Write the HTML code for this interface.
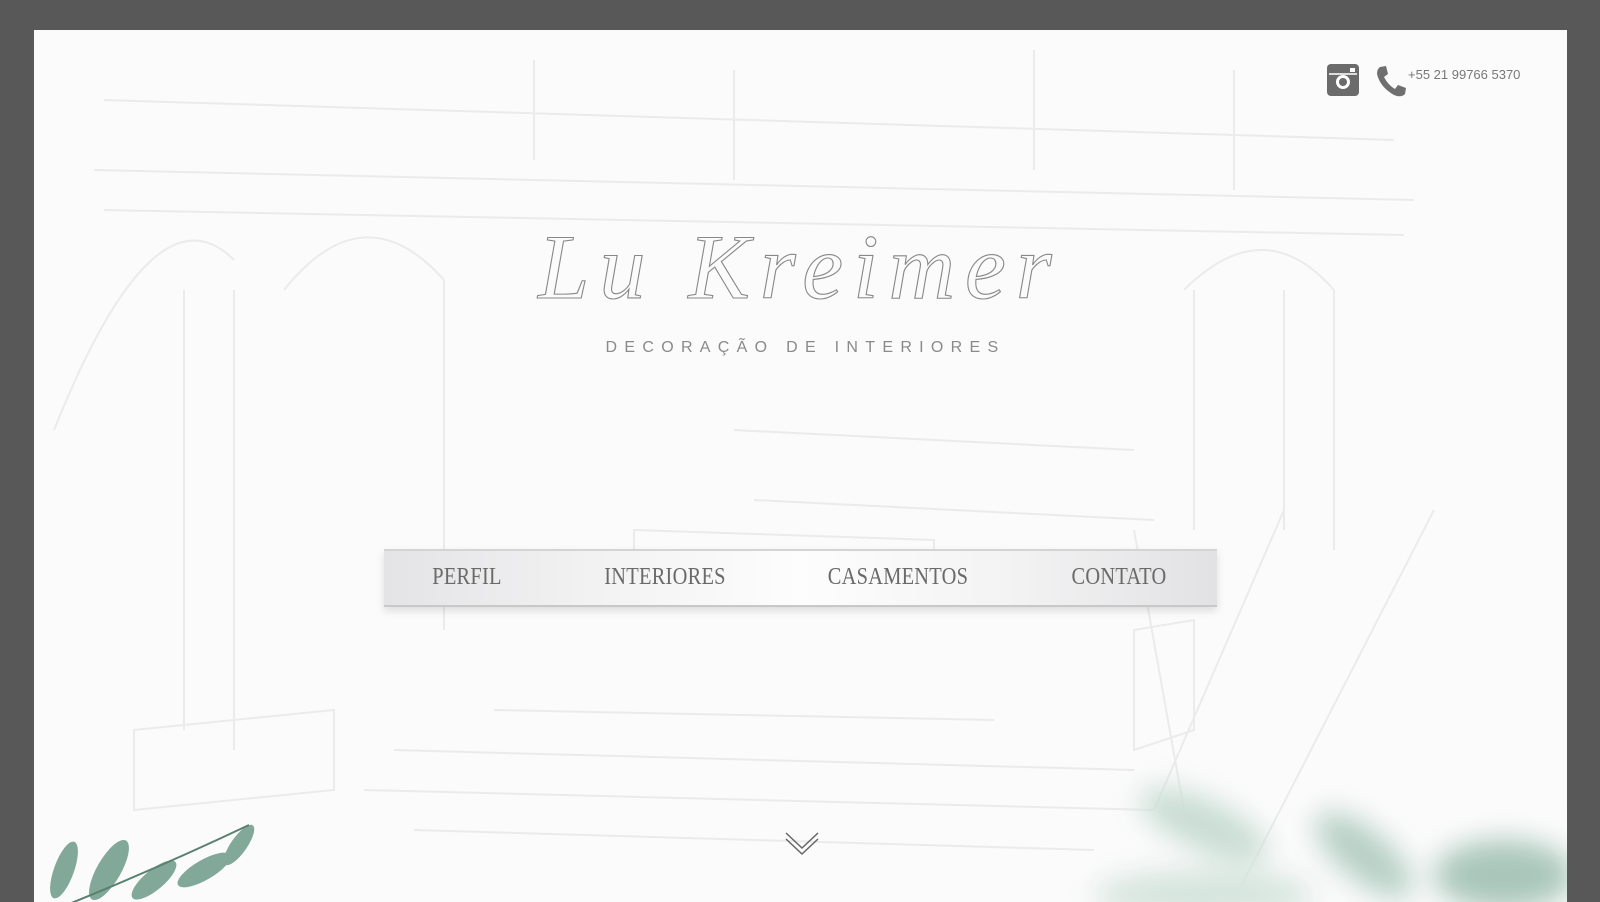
<!DOCTYPE html>
<html><head><meta charset="utf-8"><style>
html,body{margin:0;padding:0;width:1600px;height:902px;overflow:hidden;background:#585858;font-family:"Liberation Sans",sans-serif}
#page{position:absolute;left:34px;top:30px;width:1533px;height:872px;background:#fbfbfb;overflow:hidden}
.nav{position:absolute;left:350px;top:519px;width:833px;height:58px;border-top:2px solid #d4d4d4;border-bottom:2px solid #c8c8c8;box-sizing:border-box;background:linear-gradient(90deg,#e4e3e5 0%,#f2f2f3 25%,#fdfdfd 50%,#f3f3f4 75%,#e2e1e3 100%);box-shadow:0 4px 8px rgba(0,0,0,.12)}
.nav span{position:absolute;top:13px;font-family:"Liberation Serif",serif;font-size:24px;color:#6a6a6a;transform:translateX(-50%) scaleX(.85);letter-spacing:.3px;white-space:nowrap}
.sub{position:absolute;left:0;width:1533px;top:309px;text-align:center;font-size:16px;letter-spacing:7.3px;color:#8a8a8a;padding-left:5px}
.phone{position:absolute;left:1374px;top:37px;font-size:13px;color:#777}
</style></head><body>
<div id="page">
<svg width="1533" height="872" style="position:absolute;left:0;top:0" fill="none" stroke="#ebebeb" stroke-width="2">
<path d="M60 140 L1380 170 M70 70 L1360 110 M70 180 L1370 205"/>
<path d="M20 400 Q120 150 200 230 M250 260 Q330 160 410 250 M1150 260 Q1230 180 1300 260"/>
<path d="M150 260 L150 700 M200 260 L200 720 M410 250 L410 600 M1160 260 L1160 500 M1300 260 L1300 520 M1250 260 L1250 500"/>
<path d="M360 720 L1100 740 M380 800 L1060 820 M460 680 L960 690 M330 760 L1120 780"/>
<path d="M500 30 L500 130 M700 40 L700 150 M1000 20 L1000 140 M1200 40 L1200 160"/>
<path d="M700 400 L1100 420 M720 470 L1120 490 M1100 500 L1150 780 M1250 480 L1120 780 M1400 480 L1200 870"/>
<path d="M100 700 L300 680 L300 760 L100 780 Z M1100 600 L1160 590 L1160 700 L1100 720 Z"/>
<path d="M600 500 L900 510 L900 560 L600 550 Z"/>
</svg>
<svg width="300" height="110" style="position:absolute;left:0;top:770px">
<g fill="#6d9a8a" opacity=".85">
<ellipse cx="30" cy="70" rx="10" ry="30" transform="rotate(20 30 70)"/>
<ellipse cx="75" cy="70" rx="12" ry="34" transform="rotate(30 75 70)"/>
<ellipse cx="120" cy="80" rx="10" ry="28" transform="rotate(50 120 80)"/>
<ellipse cx="170" cy="70" rx="10" ry="30" transform="rotate(60 170 70)"/>
<ellipse cx="205" cy="45" rx="8" ry="24" transform="rotate(35 205 45)"/>
</g>
<path d="M20 110 Q120 70 215 25" stroke="#5a8070" stroke-width="2" fill="none"/>
</svg>
<div style="position:absolute;left:1040px;top:730px;width:500px;height:160px;filter:blur(14px)">
<div style="position:absolute;left:60px;top:40px;width:140px;height:50px;border-radius:50%;background:#c8dcd3;transform:rotate(25deg)"></div>
<div style="position:absolute;left:230px;top:70px;width:120px;height:50px;border-radius:50%;background:#b6cfc5;transform:rotate(40deg)"></div>
<div style="position:absolute;left:360px;top:80px;width:140px;height:70px;border-radius:50%;background:#a9c6ba"></div>
<div style="position:absolute;left:20px;top:110px;width:220px;height:50px;border-radius:50%;background:#d5e4dd"></div>
</div>
<svg width="34" height="34" style="position:absolute;left:1292px;top:33px">
<rect x="1" y="1" width="32" height="32" rx="4" fill="#6b6b6b"/>
<rect x="3" y="10" width="28" height="2" fill="#ddd"/>
<circle cx="17" cy="19" r="7" fill="#fff"/><circle cx="17" cy="19" r="4" fill="#6b6b6b"/>
<rect x="24" y="5" width="5" height="4" fill="#fff"/>
</svg>
<svg width="34" height="34" style="position:absolute;left:1340px;top:34px">
<path d="M6 3 L12 2 L14 10 L10 13 Q14 21 21 25 L24 21 L32 24 L31 30 Q27 34 20 31 Q6 23 3 10 Q3 5 6 3Z" fill="#6f6f6f"/>
</svg>
<div class="phone">+55 21 99766 5370</div>
<svg width="600" height="120" style="position:absolute;left:466px;top:180px">
<text x="300" y="88" text-anchor="middle" font-family="Liberation Serif,serif" font-style="italic" font-size="92" fill="none" stroke="#888" stroke-width="1.1" letter-spacing="10">Lu Kreimer</text>
</svg>
<div class="sub">DECORAÇÃO DE INTERIORES</div>
<div class="nav"><span style="left:83px">PERFIL</span><span style="left:281px">INTERIORES</span><span style="left:514px">CASAMENTOS</span><span style="left:735px">CONTATO</span></div>
<svg width="40" height="30" style="position:absolute;left:749px;top:798px" fill="none" stroke="#666" stroke-width="1.5">
<path d="M3 5 L19 20 L35 5 M3 11 L19 26 L35 11"/>
</svg>
</div>
</body></html>
